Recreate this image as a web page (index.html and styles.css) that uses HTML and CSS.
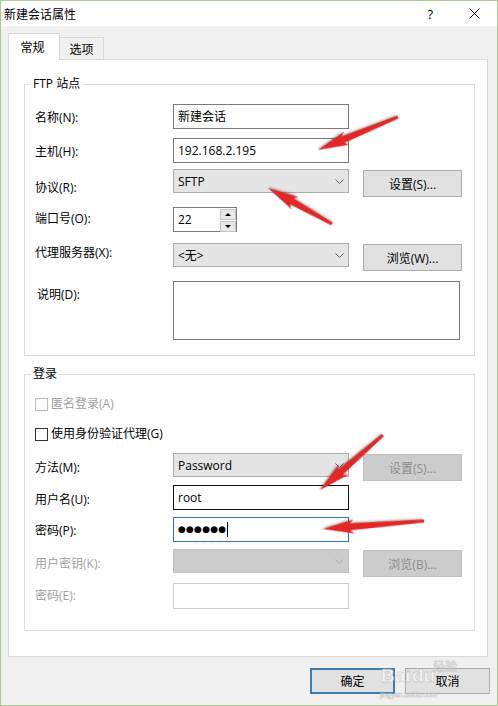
FILE: index.html
```html
<!DOCTYPE html>
<html>
  <head>
    <meta charset="utf-8">
    <title>新建会话属性</title>
    <link rel="stylesheet" href="styles.css">
  </head>
  <body>

    <div class="window">
      <div class="titlebar">
        <span class="title">新建会话属性</span>
        <span class="help">?</span>
        <svg class="close" width="11" height="11" viewBox="0 0 11 11"><path d="M0.5 0.5 L10.5 10.5 M10.5 0.5 L0.5 10.5" stroke="#000" stroke-width="1"/></svg>
      </div>

      <div class="tabs">
        <div class="tab active">常规</div>
        <div class="tab">选项</div>
      </div>

      <div class="panel">
        <fieldset class="group site">
          <legend>FTP 站点</legend>

          <div class="row row-name">
            <label>名称(N):</label>
            <div class="input">新建会话</div>
          </div>

          <div class="row row-host">
            <label>主机(H):</label>
            <div class="input">192.168.2.195</div>
          </div>

          <div class="row row-proto">
            <label>协议(R):</label>
            <div class="combo">SFTP
              <svg width="9" height="5" viewBox="0 0 9 5"><path d="M0.5 0.5 L4.5 4.5 L8.5 0.5" fill="none" stroke="#666"/></svg>
            </div>
            <button class="btn">设置(S)...</button>
          </div>

          <div class="row row-port">
            <label>端口号(O):</label>
            <div class="input spin">22
              <div class="spin-btns">
                <span class="up"></span>
                <span class="down"></span>
              </div>
            </div>
          </div>

          <div class="row row-proxy">
            <label>代理服务器(X):</label>
            <div class="combo">&lt;无&gt;
              <svg width="9" height="5" viewBox="0 0 9 5"><path d="M0.5 0.5 L4.5 4.5 L8.5 0.5" fill="none" stroke="#666"/></svg>
            </div>
            <button class="btn">浏览(W)...</button>
          </div>

          <div class="row row-desc">
            <label>说明(D):</label>
            <div class="input memo"></div>
          </div>
        </fieldset>

        <fieldset class="group login">
          <legend>登录</legend>

          <div class="check-row row-anon disabled">
            <span class="box"></span>匿名登录(A)
          </div>

          <div class="check-row row-agent">
            <span class="box"></span>使用身份验证代理(G)
          </div>

          <div class="row row-method">
            <label>方法(M):</label>
            <div class="combo">Password
              <svg width="9" height="5" viewBox="0 0 9 5"><path d="M0.5 0.5 L4.5 4.5 L8.5 0.5" fill="none" stroke="#666"/></svg>
            </div>
            <button class="btn" disabled>设置(S)...</button>
          </div>

          <div class="row row-user">
            <label>用户名(U):</label>
            <div class="input hover">root</div>
          </div>

          <div class="row row-pass">
            <label>密码(P):</label>
            <div class="input focus"><span class="dots">●●●●●●</span><span class="caret"></span></div>
          </div>

          <div class="row row-key disabled">
            <label>用户密钥(K):</label>
            <div class="combo">
              <span></span>
              <svg width="9" height="5" viewBox="0 0 9 5"><path d="M0.5 0.5 L4.5 4.5 L8.5 0.5" fill="none" stroke="#aaa"/></svg>
            </div>
            <button class="btn" disabled>浏览(B)...</button>
          </div>

          <div class="row row-pass2 disabled">
            <label>密码(E):</label>
            <div class="input"></div>
          </div>
        </fieldset>
      </div>

      <div class="actions">
        <button class="btn default">确定</button>
        <button class="btn">取消</button>
      </div>

      <!-- annotation arrows drawn over the dialog -->
      <svg class="marks" width="498" height="706" viewBox="0 0 498 706">
        <g class="arrow">
          <polygon transform="translate(398 117) rotate(157.6)" points="0,-1.5 59.5,-3.5 55.5,-7 86.5,0 55.5,7 59.5,3.5 0,1.5"/>
          <polygon transform="translate(332 224) rotate(-150.6)" points="0,-1.5 46.4,-3.5 42.4,-7 73.4,0 42.4,7 46.4,3.5 0,1.5"/>
          <polygon transform="translate(383 435) rotate(138.9)" points="0,-1.5 56.6,-3.5 52.6,-7 83.6,0 52.6,7 56.6,3.5 0,1.5"/>
          <polygon transform="translate(424 521) rotate(175.5)" points="0,-1.5 74.3,-3.5 70.3,-7 101.3,0 70.3,7 74.3,3.5 0,1.5"/>
        </g>
        <g class="stamp">
          <text x="381" y="682" class="stamp-big">Bai</text>
          <text x="412" y="682" class="stamp-big">du</text>
          <text x="433" y="671" class="stamp-cn">经验</text>
          <text x="380" y="697" class="stamp-small">jingyan.baidu.com</text>
        </g>
      </svg>
    </div>

  </body>
</html>
```

FILE: styles.css
```css
body {
  margin: 0;
  background-color: #f0f0f0;
  font-family: "Open Sans", "Noto Sans CJK SC", sans-serif;
  font-size: 12px;
  color: #000;
}

.window {
  position: relative;
  width: 498px;
  height: 706px;
  box-sizing: border-box;
  border: 1px solid #adc794;
  background-color: #f0f0f0;
  display: flex;
  flex-direction: column;
}

/* title bar */

.titlebar {
  height: 25px;
  background-color: #fff;
  display: flex;
  align-items: center;
  padding-left: 3px;
}

.title {
  flex: 1;
  font-family: "Noto Sans CJK SC", sans-serif;
  line-height: 25px;
}

.help {
  font-size: 13px;
  margin-right: 36px;
}

.close {
  margin-right: 17px;
}

/* tabs */

.tabs {
  display: flex;
  align-items: flex-end;
  height: 26px;
  margin-top: 7px;
  padding-left: 7px;
}

.tab {
  box-sizing: border-box;
  height: 22px;
  width: 45px;
  text-align: center;
  line-height: 21px;
  font-family: "Noto Sans CJK SC", sans-serif;
  background-color: #f0f0f0;
  border: 1px solid #d9d9d9;
  border-bottom: none;
  margin-left: -1px;
}

.tab.active {
  position: relative;
  z-index: 1;
  height: 27px;
  width: 52px;
  margin-left: 0;
  margin-bottom: -1px;
  line-height: 25px;
  background-color: #fff;
  padding-right: 3px;
}

/* page */

.panel {
  box-sizing: border-box;
  height: 598px;
  margin: 0 9px 0 7px;
  background-color: #fff;
  border: 1px solid #d9d9d9;
}

.group {
  margin: 16px 12px 0 15px;
  padding: 0 0 15px 0;
  border: 1px solid #dcdcdc;
  min-width: 0;
}

.group legend {
  margin-left: 6px;
  padding: 0 2px;
  line-height: 16px;
}

.group.login {
  margin-top: 10px;
  padding-bottom: 21px;
}

.row {
  display: grid;
  grid-template-columns: 124px 176px 99px;
  column-gap: 14px;
  align-items: start;
  padding-left: 10px;
}

.row label {
  line-height: 16px;
}

.row.disabled label,
.check-row.disabled {
  color: #a0a0a0;
}

/* text boxes */

.input {
  box-sizing: border-box;
  height: 25px;
  border: 1px solid #7a7a7a;
  background-color: #fff;
  padding-left: 4px;
  line-height: 23px;
}

.input.hover {
  border-color: #111;
}

.input.focus {
  border-color: #2a7bab;
  display: flex;
  align-items: center;
}

.dots {
  font-family: "DejaVu Sans", sans-serif;
  font-size: 9px;
  letter-spacing: 0.2px;
}

.caret {
  width: 1px;
  height: 15px;
  margin-left: 1px;
  background-color: #000;
}

.row.disabled .input {
  border-color: #cccccc;
}

.memo {
  grid-column: 2 / 4;
  width: 287px;
  height: 59px;
}

.spin {
  width: 64px;
  position: relative;
}

.spin-btns {
  position: absolute;
  top: 1px;
  right: 0;
  width: 16px;
  display: flex;
  flex-direction: column;
  gap: 1px;
}

.spin-btns span {
  box-sizing: border-box;
  height: 11px;
  background-color: #e8e8e8;
  border: 1px solid #c6c6c6;
  display: flex;
  align-items: center;
  justify-content: center;
}

.spin-btns .up::after {
  content: "";
  border: 3px solid transparent;
  border-bottom: 3px solid #000;
  border-top: none;
}

.spin-btns .down::after {
  content: "";
  border: 3px solid transparent;
  border-top: 3px solid #000;
  border-bottom: none;
}

/* drop-down lists */

.combo {
  box-sizing: border-box;
  height: 24px;
  background-color: #e5e5e5;
  border: 1px solid #acacac;
  display: flex;
  align-items: center;
  justify-content: space-between;
  padding: 0 4px 0 4px;
}

.row.disabled .combo {
  background-color: #cccccc;
  border-color: #bfbfbf;
}

/* buttons */

.btn {
  box-sizing: border-box;
  height: 27px;
  margin-top: 1px;
  font-family: "Open Sans", "Noto Sans CJK SC", sans-serif;
  font-size: 12px;
  color: #000;
  background-color: #e1e1e1;
  border: 1px solid #adadad;
  padding: 0;
}

.btn:disabled {
  color: #8c8c8c;
  background-color: #cccccc;
  border-color: #bfbfbf;
}

/* row spacing */

.row-name { margin-top: 12px; }
.row-host { margin-top: 9px; }
.row-proto { margin-top: 6px; }
.row-port { margin-top: 10px; }
.row-proxy { margin-top: 11px; }
.row-desc { margin-top: 10px; }

.row-name label { padding-top: 6px; }
.row-host label { padding-top: 6px; }
.row-proto label { padding-top: 11px; }
.row-port label { padding-top: 4px; }
.row-proxy label { padding-top: 2px; }
.row-desc label { padding-top: 6px; padding-left: 2px; }

.row-method { margin-top: 11px; }
.row-user { margin-top: 4px; }
.row-pass { margin-top: 7px; }
.row-key { margin-top: 7px; }
.row-pass2 { margin-top: 6px; }

.row-method label { padding-top: 7px; }
.row-user label { padding-top: 7px; }
.row-pass label { padding-top: 6px; }
.row-key label { padding-top: 7px; }
.row-pass2 label { padding-top: 5px; }

.row-pass2 .input {
  height: 26px;
}

/* check boxes */

.check-row {
  display: flex;
  align-items: center;
  height: 16px;
  padding-left: 10px;
  line-height: 16px;
}

.check-row .box {
  box-sizing: border-box;
  width: 13px;
  height: 13px;
  border: 1px solid #333;
  background-color: #fff;
  margin-right: 3px;
}

.check-row.disabled .box {
  border-color: #bcbcbc;
}

.row-anon { margin-top: 14px; }
.row-agent { margin-top: 14px; }

/* dialog buttons */

.actions {
  display: flex;
  justify-content: flex-end;
  gap: 10px;
  margin-top: 10px;
  padding-right: 7px;
}

.actions .btn {
  width: 85px;
  height: 26px;
}

.actions .btn.default {
  border: 2px solid #3a7db0;
}

/* overlay */

.marks {
  position: absolute;
  top: -1px;
  left: -1px;
  pointer-events: none;
}

.arrow polygon {
  fill: #e32626;
  filter: drop-shadow(1px 1px 1px rgba(0, 0, 0, 0.35));
}

.stamp text {
  fill: rgba(255, 255, 255, 0.7);
  stroke: rgba(160, 160, 160, 0.4);
  stroke-width: 0.8px;
}

.stamp-big {
  font-family: "Liberation Sans", sans-serif;
  font-size: 19px;
  font-weight: bold;
}

.stamp-cn {
  font-family: "Noto Sans CJK SC", sans-serif;
  font-size: 12px;
}

.stamp-small {
  font-family: "Liberation Sans", sans-serif;
  font-size: 7px;
}
```
